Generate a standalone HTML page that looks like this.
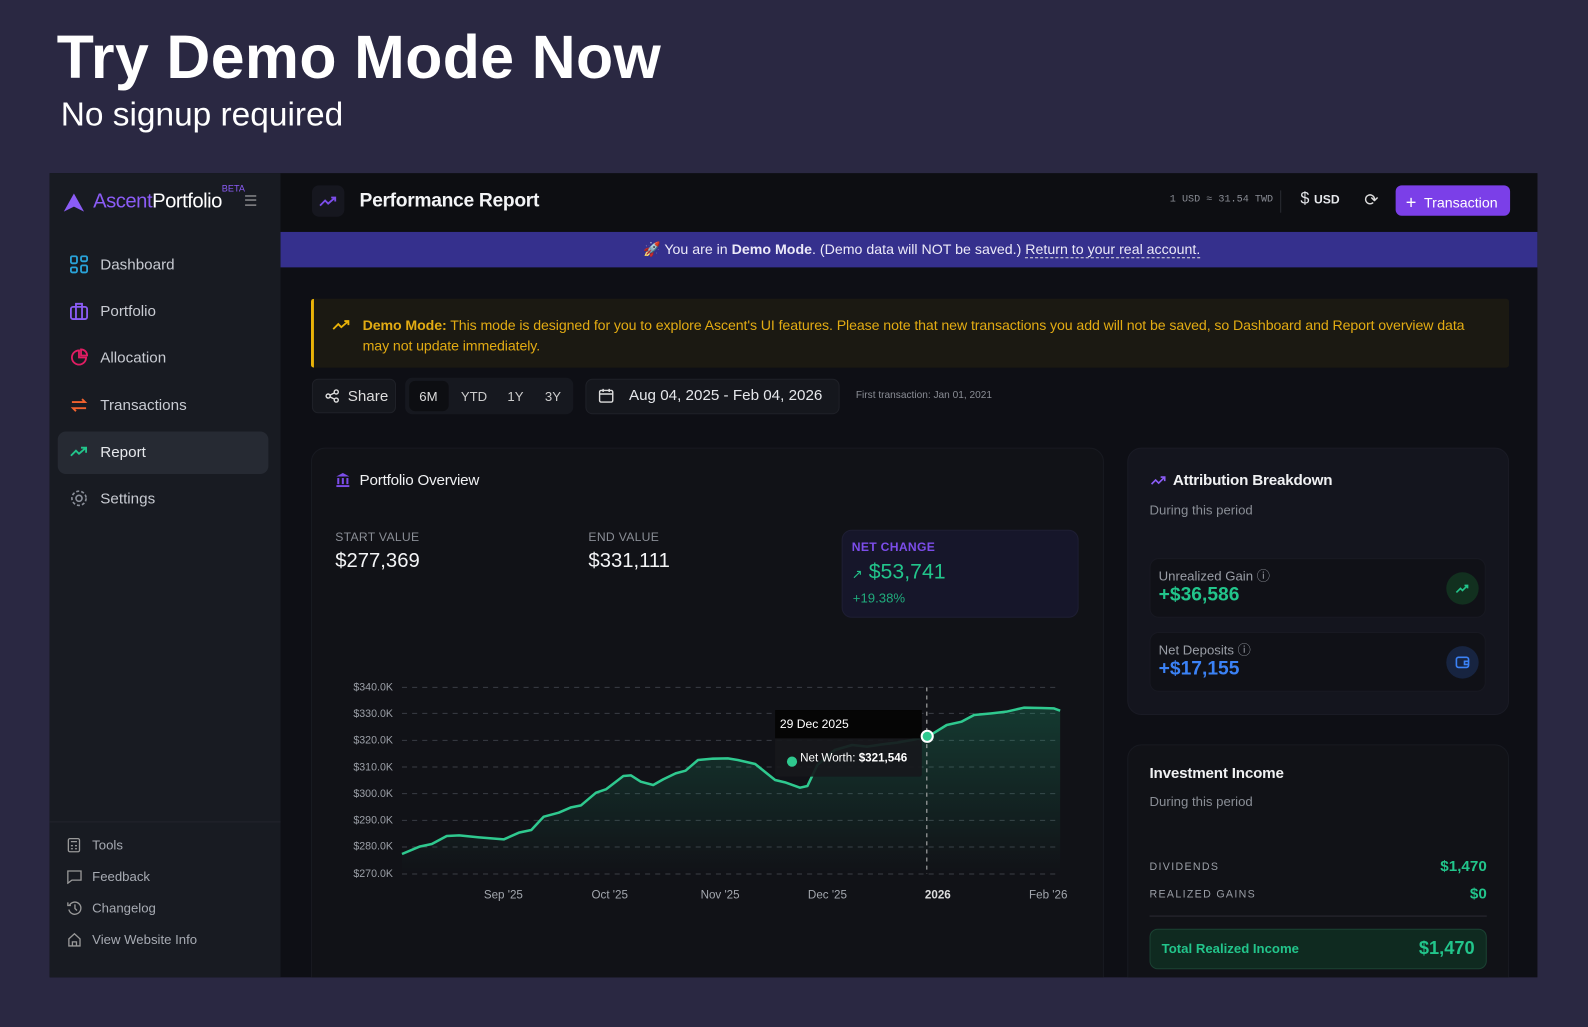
<!DOCTYPE html>
<html><head><meta charset="utf-8"><style>
*{box-sizing:border-box;margin:0;padding:0}
body{width:1588px;height:1027px;background:#2a2842;overflow:hidden;font-family:"Liberation Sans",sans-serif;}
#w{position:absolute;left:0;top:0;width:1568px;height:1014px;transform:scale(1.0128);transform-origin:0 0;}
.a{position:absolute;white-space:nowrap}
.h1{left:56px;top:22px;font-size:60px;font-weight:bold;color:#fff;letter-spacing:0.4px}
.h2{left:60px;top:94px;font-size:33px;color:#fff}
#frame{position:absolute;left:49px;top:171px;width:1469px;height:794px;background:#0e0f15;overflow:hidden}
#side{position:absolute;left:0;top:0;width:228px;height:794px;background:#181b22}
.nav{position:absolute;left:20px;font-size:15px;color:#c8cbd2;white-space:nowrap}
.nav svg{position:absolute;left:0;top:-1px}
.nav span{position:absolute;left:30px;top:0;white-space:nowrap}
.bn{position:absolute;left:17px;font-size:13px;color:#a7abb3;white-space:nowrap}
.bn span{position:absolute;left:25px;top:0;white-space:nowrap}
.card{position:absolute;border-radius:14px}
.g{color:#22c58b}
</style></head><body><div id="w">
<div class="a h1">Try Demo Mode Now</div>
<div class="a h2">No signup required</div>
<div id="frame">
 <div id="side">
  <svg class="a" style="left:13px;top:19px" width="22" height="20"><path d="M11 1 L21 19 L11 14 L1 19 Z" fill="#8b5cf6"/></svg>
  <div class="a" style="left:43px;top:17px;font-size:20px;letter-spacing:-0.5px"><span style="color:#8b5cf6">Ascent</span><span style="color:#fff">Portfolio</span></div>
  <div class="a" style="left:170px;top:10px;font-size:9px;color:#8b5cf6">BETA</div>
  <div class="a" style="left:193px;top:22px;width:11px;height:10px;border-top:1.5px solid #bbb;border-bottom:1.5px solid #bbb"><div style="margin-top:3px;border-top:1.5px solid #bbb"></div></div>
  <div class="a" style="left:8px;top:255px;width:208px;height:42px;background:#262a33;border-radius:8px"></div>
  <div class="nav" style="top:82px"><svg width="18" height="18" fill="none" stroke="#29a3d9" stroke-width="1.8"><rect x="1" y="1" width="6" height="7" rx="1.5"/><rect x="11" y="1" width="6" height="5" rx="1.5"/><rect x="1" y="12" width="6" height="5" rx="1.5"/><rect x="11" y="10" width="6" height="7" rx="1.5"/></svg><span>Dashboard</span></div>
  <div class="nav" style="top:128px"><svg width="18" height="18" fill="none" stroke="#8b5cf6" stroke-width="1.8"><rect x="1" y="5" width="16" height="12" rx="2"/><path d="M6 5V2h6v3M6 5v12M12 5v12"/></svg><span>Portfolio</span></div>
  <div class="nav" style="top:174px"><svg width="18" height="18" fill="none" stroke="#e11d63" stroke-width="1.8"><path d="M9 2a7 7 0 1 0 7 7H9z"/><path d="M11 1a6 6 0 0 1 6 6h-6z"/></svg><span>Allocation</span></div>
  <div class="nav" style="top:221px"><svg width="18" height="18" fill="none" stroke="#f0622e" stroke-width="1.8"><path d="M2 6h13l-3-3M16 12H3l3 3"/></svg><span>Transactions</span></div>
  <div class="nav" style="top:267px"><svg width="18" height="18" fill="none" stroke="#22c58b" stroke-width="1.8"><path d="M1 13l5-5 3 3 7-6M11 5h5v5"/></svg><span style="color:#e6e8ec">Report</span></div>
  <div class="nav" style="top:313px"><svg width="18" height="18" fill="none" stroke="#8a8f99" stroke-width="1.6"><circle cx="9" cy="9" r="3"/><circle cx="9" cy="9" r="7" stroke-dasharray="3 2"/></svg><span>Settings</span></div>
  <div class="a" style="left:0;top:640px;width:228px;border-top:1px solid #22252d"></div>
  <div class="bn" style="top:656px"><svg class="a" width="14" height="15" fill="none" stroke="#999" stroke-width="1.3"><rect x="1.5" y="1" width="11" height="13" rx="1.5"/><path d="M4 4h6M4 8h2M8 8h2M4 11h2M8 11h2"/></svg><span>Tools</span></div>
  <div class="bn" style="top:687px"><svg class="a" width="15" height="15" fill="none" stroke="#999" stroke-width="1.3"><path d="M1 2h13v9H5l-4 3z"/></svg><span>Feedback</span></div>
  <div class="bn" style="top:718px"><svg class="a" width="15" height="15" fill="none" stroke="#999" stroke-width="1.3"><path d="M2.5 5A6 6 0 1 1 2 9M1 2v3h3M8 4v4l2 2"/></svg><span>Changelog</span></div>
  <div class="bn" style="top:749px"><svg class="a" width="15" height="15" fill="none" stroke="#999" stroke-width="1.3"><path d="M2 7l5.5-5 5.5 5v7H2z M5.5 14v-4h4v4"/></svg><span>View Website Info</span></div>
 </div>
 <!-- header -->
 <div class="a" style="left:228px;top:0;width:1241px;height:58px;background:#0d0e12"></div>
 <div class="a" style="left:259px;top:12px;width:32px;height:31px;background:#16171f;border-radius:7px"><svg style="position:absolute;left:7px;top:9px" width="18" height="14" fill="none" stroke="#7c4dea" stroke-width="1.8"><path d="M1 11l5-5 3 3 7-6M12 3h4v4"/></svg></div>
 <div class="a" style="left:306px;top:17px;font-size:19px;color:#f3f4f6;font-weight:bold;letter-spacing:-0.3px">Performance Report</div>
 <div class="a" style="left:1106px;top:21px;font-size:10px;color:#8a8d95;font-family:'Liberation Mono',monospace">1 USD ≈ 31.54 TWD</div>
 <div class="a" style="left:1215px;top:17px;height:22px;border-left:1px solid #2a2c33"></div>
 <div class="a" style="left:1235px;top:17px;font-size:16px;color:#e5e7eb">$ <b style="font-size:12px">USD</b></div>
 <div class="a" style="left:1298px;top:17px;font-size:17px;color:#ddd">⟳</div>
 <div class="a" style="left:1329px;top:12px;width:113px;height:30px;background:#7b3fe8;border-radius:6px;color:#fff;font-size:14px;padding:6px 0 0 10px"><span style="font-size:18px;position:relative;top:1px">+</span>&nbsp; Transaction</div>
 <!-- demo bar -->
 <div class="a" style="left:228px;top:58px;width:1241px;height:35px;background:#35308d;color:#eceaf8;font-size:14px;text-align:center;padding-top:9px;padding-left:25px">🚀 You are in <b>Demo Mode</b>. (Demo data will NOT be saved.) <span style="border-bottom:1px dashed #ddd">Return to your real account.</span></div>
 <!-- warning -->
 <div class="a" style="left:258px;top:124px;width:1183px;height:68px;background:#1b1912;border-left:3px solid #eab308;border-radius:3px"></div>
 <svg class="a" style="left:279px;top:143px" width="20" height="14" fill="none" stroke="#eab308" stroke-width="1.8"><path d="M1 11l5-5 3 3 7-6M12 3h4v4"/></svg>
 <div class="a" style="left:309px;top:141px;font-size:14px;color:#e2ab13;line-height:19.5px;letter-spacing:-0.1px"><b>Demo Mode:</b> This mode is designed for you to explore Ascent's UI features. Please note that new transactions you add will not be saved, so Dashboard and Report overview data<br>may not update immediately.</div>
 <!-- controls -->
 <div class="a" style="left:259px;top:203px;width:83px;height:34px;background:#15171d;border:1px solid #1f2128;border-radius:6px;color:#ddd;font-size:15px;padding:8px 0 0 12px"><svg style="vertical-align:-2px" width="14" height="14" fill="none" stroke="#ddd" stroke-width="1.4"><circle cx="3" cy="7" r="2"/><circle cx="11" cy="3" r="2"/><circle cx="11" cy="11" r="2"/><path d="M5 6l4-2M5 8l4 2"/></svg>&nbsp; Share</div>
 <div class="a" style="left:351px;top:202px;width:166px;height:36px;background:#16181f;border-radius:7px"></div>
 <div class="a" style="left:355px;top:205px;width:39px;height:30px;background:#0d0e12;border-radius:6px"></div>
 <div class="a" style="left:365px;top:213px;font-size:13px;color:#ddd">6M</div>
 <div class="a" style="left:406px;top:213px;font-size:13px;color:#ccc">YTD</div>
 <div class="a" style="left:452px;top:213px;font-size:13px;color:#ccc">1Y</div>
 <div class="a" style="left:489px;top:213px;font-size:13px;color:#ccc">3Y</div>
 <div class="a" style="left:529px;top:203px;width:251px;height:35px;background:#15171d;border:1px solid #1f2128;border-radius:7px"></div>
 <svg class="a" style="left:542px;top:212px" width="15" height="15" fill="none" stroke="#ddd" stroke-width="1.4"><rect x="1" y="2.5" width="13" height="11.5" rx="1.5"/><path d="M1 6h13M4.5 1v3M10.5 1v3"/></svg>
 <div class="a" style="left:572px;top:211px;font-size:15px;color:#e5e7eb">Aug 04, 2025 - Feb 04, 2026</div>
 <div class="a" style="left:796px;top:214px;font-size:10px;color:#8a8d95">First transaction: Jan 01, 2021</div>
 <!-- overview card -->
 <div class="card" style="left:258px;top:271px;width:783px;height:540px;background:#111217;border:1px solid #181a21"></div>
 <svg class="a" style="left:283px;top:296px" width="13" height="14" fill="#7c4dea"><path d="M6.5 0L13 3.5H0z"/><rect x="1" y="5" width="2" height="6"/><rect x="5.5" y="5" width="2" height="6"/><rect x="10" y="5" width="2" height="6"/><rect x="0" y="12" width="13" height="2"/></svg>
 <div class="a" style="left:306px;top:295px;font-size:15px;color:#f0f1f3;letter-spacing:-0.2px">Portfolio Overview</div>
 <div class="a" style="left:282px;top:352px;font-size:12px;color:#8a8e96;letter-spacing:0.3px">START VALUE</div>
 <div class="a" style="left:282px;top:372px;font-size:20px;color:#f3f4f6">$277,369</div>
 <div class="a" style="left:532px;top:352px;font-size:12px;color:#8a8e96;letter-spacing:0.3px">END VALUE</div>
 <div class="a" style="left:532px;top:372px;font-size:20px;color:#f3f4f6">$331,111</div>
 <div class="a" style="left:782px;top:352px;width:234px;height:87px;background:#16162a;border:1px solid #1e1e33;border-radius:10px"></div>
 <div class="a" style="left:792px;top:362px;font-size:12px;color:#7c4dea;font-weight:bold;letter-spacing:0.3px">NET CHANGE</div>
 <div class="a g" style="left:792px;top:382px;font-size:21px"><span style="font-size:13px">↗</span> $53,741</div>
 <div class="a g" style="left:793px;top:412px;font-size:13px;opacity:.85">+19.38%</div>
 <!-- chart -->
 <svg class="a" style="left:-49px;top:-171px" width="1568" height="1014">
  <defs><linearGradient id="fg" x1="0" y1="0" x2="0" y2="1"><stop offset="0" stop-color="#22c58b" stop-opacity=".22"/><stop offset="1" stop-color="#22c58b" stop-opacity="0"/></linearGradient></defs>
  <g transform="translate(296.2,641.8) scale(0.4912,0.3291)">
   <path d="M205 112H1525M205 190H1525M205 271H1525M205 351H1525M205 431H1525M205 511H1525M205 591H1525M205 672H1525" stroke="#3a3d45" stroke-dasharray="5 5" vector-effect="non-scaling-stroke" stroke-width="1"/>
   <path d="M205 612 L240 590 L265 582 L295 558 L320 556 L360 562 L410 568 L440 548 L465 540 L490 500 L520 488 L545 472 L565 466 L595 428 L615 418 L650 378 L665 376 L685 395 L710 405 L730 388 L755 370 L775 362 L800 330 L830 326 L860 325 L880 330 L915 342 L930 360 L955 390 L975 397 L1005 413 L1020 408 L1040 345 L1075 300 L1110 285 L1140 290 L1170 283 L1200 278 L1230 270 L1262 260 L1300 225 L1330 215 L1355 195 L1390 190 L1420 185 L1455 173 L1490 174 L1515 175 L1528 182 L1528 672 L205 672Z" fill="url(#fg)"/>
   <path d="M205 612 L240 590 L265 582 L295 558 L320 556 L360 562 L410 568 L440 548 L465 540 L490 500 L520 488 L545 472 L565 466 L595 428 L615 418 L650 378 L665 376 L685 395 L710 405 L730 388 L755 370 L775 362 L800 330 L830 326 L860 325 L880 330 L915 342 L930 360 L955 390 L975 397 L1005 413 L1020 408 L1040 345 L1075 300 L1110 285 L1140 290 L1170 283 L1200 278 L1230 270 L1262 260 L1300 225 L1330 215 L1355 195 L1390 190 L1420 185 L1455 173 L1490 174 L1515 175 L1528 182" fill="none" stroke="#2fc98f" stroke-width="2.5" vector-effect="non-scaling-stroke" stroke-linejoin="round"/>
   <path d="M1260 112V672" stroke="#bbb" stroke-dasharray="4 4" vector-effect="non-scaling-stroke" stroke-width="1"/>
   <rect x="955" y="180" width="295" height="200" rx="6" fill="#17181c" fill-opacity=".92"/>
   <rect x="955" y="180" width="295" height="85" fill="#050505"/>
  </g>
  <circle cx="915.5" cy="727" r="5.5" fill="#2fc98f" stroke="#fff" stroke-width="2"/>
  <circle cx="782" cy="752" r="5" fill="#2fc98f"/>
  <text x="770" y="719" font-size="12" fill="#fff" font-family="Liberation Sans">29 Dec 2025</text>
  <text x="790" y="752" font-size="11.5" fill="#fff" font-family="Liberation Sans">Net Worth:  <tspan font-weight="bold">$321,546</tspan></text>
  <g font-size="10.5" fill="#9ca0a8" font-family="Liberation Sans" text-anchor="end">
   <text x="388" y="682">$340.0K</text><text x="388" y="708">$330.0K</text><text x="388" y="734">$320.0K</text><text x="388" y="761">$310.0K</text><text x="388" y="787">$300.0K</text><text x="388" y="813">$290.0K</text><text x="388" y="839">$280.0K</text><text x="388" y="866">$270.0K</text>
  </g>
  <g font-size="11.5" fill="#a3a7ae" font-family="Liberation Sans" text-anchor="middle">
   <text x="497" y="887">Sep '25</text><text x="602" y="887">Oct '25</text><text x="711" y="887">Nov '25</text><text x="817" y="887">Dec '25</text><text x="926" y="887" font-weight="bold" fill="#ddd">2026</text><text x="1035" y="887">Feb '26</text>
  </g>
 </svg>
 <!-- attribution -->
 <div class="card" style="left:1064px;top:271px;width:377px;height:264px;background:#14151e;border:1px solid #1a1b25"></div>
 <svg class="a" style="left:1087px;top:297px" width="16" height="12" fill="none" stroke="#8b5cf6" stroke-width="1.6"><path d="M1 10l4-4 3 3 6-6M10 3h4v4"/></svg>
 <div class="a" style="left:1109px;top:295px;font-size:15px;color:#f0f1f3;font-weight:bold;letter-spacing:-0.2px">Attribution Breakdown</div>
 <div class="a" style="left:1086px;top:325px;font-size:13px;color:#8a8e96">During this period</div>
 <div class="a" style="left:1086px;top:380px;width:332px;height:59px;background:#101117;border:1px solid #181922;border-radius:9px"></div>
 <div class="a" style="left:1095px;top:387px;font-size:13px;color:#9a9ea6">Unrealized Gain ⓘ</div>
 <div class="a g" style="left:1095px;top:406px;font-size:19px;font-weight:bold">+$36,586</div>
 <div class="a" style="left:1379px;top:394px;width:32px;height:32px;border-radius:50%;background:#12301f"><svg style="position:absolute;left:9px;top:11px" width="14" height="10" fill="none" stroke="#22c58b" stroke-width="1.6"><path d="M1 9l4-4 2 2 5-5M9 2h3v3"/></svg></div>
 <div class="a" style="left:1086px;top:453px;width:332px;height:59px;background:#101117;border:1px solid #181922;border-radius:9px"></div>
 <div class="a" style="left:1095px;top:460px;font-size:13px;color:#9a9ea6">Net Deposits ⓘ</div>
 <div class="a" style="left:1095px;top:479px;font-size:19px;font-weight:bold;color:#3b82f6">+$17,155</div>
 <div class="a" style="left:1379px;top:467px;width:32px;height:32px;border-radius:50%;background:#172440"><svg style="position:absolute;left:9px;top:9px" width="14" height="14" fill="none" stroke="#3b82f6" stroke-width="1.6"><rect x="1" y="2" width="12" height="10" rx="2"/><path d="M13 6H9v3h4"/></svg></div>
 <!-- investment income -->
 <div class="card" style="left:1064px;top:564px;width:377px;height:250px;background:#111217;border:1px solid #181a21"></div>
 <div class="a" style="left:1086px;top:584px;font-size:15px;color:#f0f1f3;font-weight:bold;letter-spacing:-0.2px">Investment Income</div>
 <div class="a" style="left:1086px;top:613px;font-size:13px;color:#8a8e96">During this period</div>
 <div class="a" style="left:1086px;top:679px;font-size:10.5px;color:#9a9ea6;letter-spacing:1.3px">DIVIDENDS</div>
 <div class="a g" style="left:1360px;top:676px;width:59px;text-align:right;font-size:15px;font-weight:bold">$1,470</div>
 <div class="a" style="left:1086px;top:706px;font-size:10.5px;color:#9a9ea6;letter-spacing:1.3px">REALIZED GAINS</div>
 <div class="a g" style="left:1360px;top:703px;width:59px;text-align:right;font-size:15px;font-weight:bold">$0</div>
 <div class="a" style="left:1086px;top:733px;width:333px;border-top:1px solid #2a2c33"></div>
 <div class="a" style="left:1086px;top:746px;width:333px;height:40px;background:#0f2a20;border:1px solid #1b4233;border-radius:8px"></div>
 <div class="a g" style="left:1098px;top:758px;font-size:13px;font-weight:bold">Total Realized Income</div>
 <div class="a g" style="left:1340px;top:755px;width:67px;text-align:right;font-size:18px;font-weight:bold">$1,470</div>
</div>
</div></body></html>
